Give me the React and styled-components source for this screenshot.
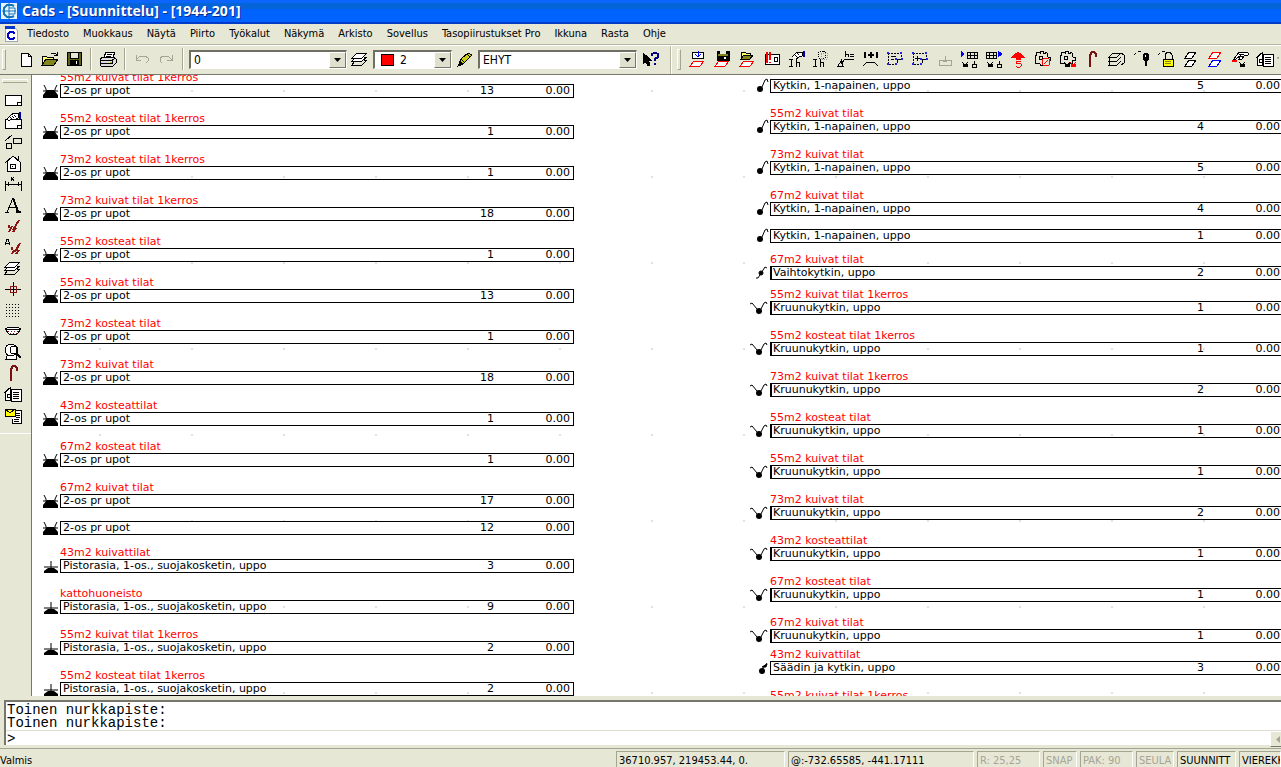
import React from "react";
import styled, { createGlobalStyle } from "styled-components";

const GlobalStyle = createGlobalStyle`
  * {
    box-sizing: border-box;
  }

  body {
    margin: 0;
    background: #e7e7d6;
    color: #000;
    font-family: "DejaVu Sans Condensed", "DejaVu Sans", sans-serif;
    font-size: 11px;
    overflow: hidden;
  }
`;

const Window = styled.div`
  display: flex;
  flex-direction: column;
  height: 100vh;
`;

const TitleBar = styled.header`
  display: flex;
  align-items: center;
  gap: 5px;
  height: 24px;
  padding: 0 0 2px 1px;
  background: linear-gradient(#0a66ff 0 3px, #0464d8 3px 9px, #0062ff 9px 22px, #003cc8 22px);
`;

const Title = styled.h1`
  margin: 0;
  color: #fff;
  font-family: "Open Sans", sans-serif;
  font-size: 14px;
  line-height: 20px;
  font-weight: 700;
  text-shadow: 1px 1px #0a2a88;
  white-space: nowrap;
`;

const MenuBar = styled.nav`
  display: flex;
  align-items: center;
  gap: 14px;
  height: 21px;
  padding: 0 0 1px 4px;
  border-bottom: 1px solid #b5b5a2;
`;

const MenuItem = styled.button`
  padding: 0;
  border: 0;
  background: none;
  color: inherit;
  font: inherit;
  line-height: 18px;
  white-space: nowrap;
`;

const ToolRow = styled.div`
  display: flex;
  height: 30px;
  border-top: 1px solid #fff;
  border-bottom: 1px solid #77776c;
`;

const ToolBar = styled.div`
  display: flex;
  align-items: center;
  padding: 0 8px 2px 2px;
  border-right: 1px solid #b5b5a2;
`;

const WideToolBar = styled.div`
  display: flex;
  flex: 1;
  align-items: center;
  min-width: 0;
  padding: 0 0 2px 5px;
  border-left: 1px solid #fff;
  overflow: hidden;
`;

const Grip = styled.span`
  flex: none;
  width: 4px;
  height: 21px;
  margin-right: ${(p) => (p.$tight ? 5 : 8)}px;
  border: 1px solid #fff;
  border-right-color: #a5a594;
  border-bottom-color: #a5a594;
`;

const Separator = styled.span`
  flex: none;
  width: 2px;
  height: 22px;
  margin: 0 4px;
  border-left: 1px solid #a5a594;
  border-right: 1px solid #fff;
`;

const IconButton = styled.button`
  display: flex;
  align-items: center;
  justify-content: center;
  flex: ${(p) => (p.$fluid ? "1 1 0" : "none")};
  width: 24px;
  height: ${(p) => (p.$short ? 21 : 24)}px;
  min-width: 0;
  padding: 0;
  border: 0;
  background: none;
`;

const CutButton = styled(IconButton)`
  width: 4px;
  overflow: hidden;
  justify-content: flex-start;
`;

const Combo = styled.label`
  display: grid;
  grid-template-columns: ${(p) => (p.$swatch ? "22px 1fr" : "1fr")};
  align-items: center;
  width: ${(p) => p.$width}px;
  height: 19px;
  margin: 0 1px;
  border: 1px solid #6f6f64;
  border-width: 2px 1px 1px 2px;
  border-right-color: #fff;
  border-bottom-color: #fff;
  background: #fff;
`;

const Select = styled.select`
  grid-row: 1;
  grid-column: -2 / -1;
  width: 100%;
  height: 16px;
  padding: 0 18px 0 3px;
  border: 0;
  background: none;
  color: #000;
  font-family: "DejaVu Sans Condensed", "DejaVu Sans", sans-serif;
  font-size: 12px;
  line-height: 16px;
  appearance: none;
`;

const Swatch = styled.span`
  width: 13px;
  height: 12px;
  margin-left: 6px;
  border: 1px solid #000;
  background: #f00;
`;

const DropArrow = styled.span`
  grid-row: 1;
  grid-column: -2 / -1;
  justify-self: end;
  display: flex;
  align-items: center;
  justify-content: center;
  width: 17px;
  height: 16px;
  border: 1px solid #fff;
  border-right-color: #77776c;
  border-bottom-color: #77776c;
  background: #e0e0cf;
  pointer-events: none;
`;

const Workspace = styled.main`
  display: flex;
  flex: 1;
  min-height: 0;
`;

const SideBar = styled.aside`
  flex: none;
  width: 32px;
  border-right: 1px solid #77776c;
`;

const SideTools = styled.div`
  display: flex;
  flex-direction: column;
  padding: 4px 0 8px 1px;
  border-bottom: 1px solid #fff;
`;

const SideGrip = styled.span`
  height: 4px;
  width: 26px;
  margin: 0 0 6px 1px;
  border: 1px solid #fff;
  border-bottom-color: #a5a594;
`;

const Drawing = styled.section`
  display: flex;
  flex: 1;
  align-items: flex-start;
  gap: 176px;
  min-width: 0;
  padding-left: 8px;
  background: radial-gradient(circle, #e2e2e2 0 1px, transparent 1px) 22px -27px / 92px 86px #fff;
  overflow: hidden;
`;

const PartTable = styled.table`
  flex: none;
  width: 534px;
  table-layout: fixed;
  border-collapse: separate;
  border-spacing: 0;
  font-family: "DejaVu Sans", sans-serif;
  font-size: 11px;
  line-height: 12px;
`;

const GroupCell = styled.th`
  padding: 0;
  color: #f00;
  font-weight: 400;
  text-align: left;
`;

const GroupName = styled.div`
  display: flex;
  align-items: flex-end;
  height: ${(p) => p.$space}px;
  overflow: hidden;
  white-space: nowrap;
`;

const SymbolCell = styled.td`
  height: 14px;
  padding: 0;

  svg {
    display: block;
    overflow: visible;
  }
`;

const Cell = styled.td`
  height: 14px;
  padding: 0 3px 0 2px;
  border: solid #000;
  border-width: 1px 0;
  text-align: ${(p) => (p.$number ? "right" : "left")};
  white-space: nowrap;
`;

const NameCell = styled(Cell)`
  padding-left: ${(p) => (p.$heavy ? 1 : 2)}px;
  border-left-width: ${(p) => (p.$heavy ? 2 : 1)}px;
`;

const PriceCell = styled(Cell)`
  border-right-width: 1px;
`;

const Command = styled.section`
  display: flex;
  flex-direction: column;
  height: 45px;
  margin: 4px 0 0 4px;
  padding-top: 2px;
  border-top: 2px solid #77776c;
  border-left: 2px solid #77776c;
  background: #fff;
  font-family: "Liberation Mono", monospace;
  font-size: 14px;
  line-height: 13px;
`;

const History = styled.pre`
  margin: 0;
  padding-left: 1px;
  height: 26px;
  font: inherit;
`;

const PromptRow = styled.div`
  display: flex;
  flex: 1;
  border-top: 1px solid #deded0;
`;

const Prompt = styled.input`
  flex: 1;
  min-width: 0;
  padding: 0 0 0 1px;
  border: 0;
  background: none;
  font: inherit;
  outline: none;
`;

const ScrollButton = styled.button`
  display: flex;
  align-items: center;
  justify-content: flex-end;
  width: 11px;
  padding: 0;
  border: 1px solid #fff;
  border-bottom-color: #77776c;
  border-right: 0;
  background: #e7e7d6;
`;

const StatusBar = styled.footer`
  display: flex;
  gap: 3px;
  height: 19px;
  margin-top: 3px;
  padding-top: 2px;
  border-top: 1px solid #a5a594;
  line-height: 17px;
  overflow: hidden;
`;

const StatusText = styled.span`
  flex: 1;
  padding-top: 1px;
`;

const StatusPane = styled.span`
  flex: none;
  width: ${(p) => p.$width}px;
  padding-left: 2px;
  border: 1px solid #a5a594;
  border-right-color: #fff;
  border-bottom: 0;
  color: ${(p) => (p.$off ? "#a5a594" : "#000")};
  white-space: nowrap;
  overflow: hidden;
`;

const sheet = (x, y, stroke = "#000") => (
  <path d={`M${x + 4} ${y}h10l-4 5h-10z`} stroke={stroke} fill="#fff" />
);

const hand = (
  <>
    <path d="M3 7L7 3l3-2h4v5l-4 2-3-1-2 2z" fill="#fff" />
    <path d="M6 5l2 2M8 4l2 2M10 3l2 2" />
    <path d="M15 0h2v7h-2z" fill="#00a" stroke="none" />
  </>
);

const bugs = (x, color = "#000") => (
  <>
    <path d={`M${x} 12l2 2M${x + 6} 12l-2 2`} stroke={color} />
    <path d={`M${x + 1} 14h5v3h-5z`} fill={color} stroke="none" />
  </>
);

const gear = (
  <>
    <path d="M6 1h3v2l2 1 1-2 2 2-1 2 1 1h2v3h-2l-1 1 1 2-2 1-2-1-1 1v1H6v-1l-2-1-2 1-1-2 1-2-1-1V6l2-1-1-2 2-1 2 1z" />
    <circle cx="7" cy="8" r="2" />
  </>
);

const houseDoc = (
  <>
    <path d="M1 8l5-5v12H1z" fill="#fff" />
    <path d="M3 9h3v3H3zM0 8l7-6M7 4h10v12H7z" fill="#fff" />
    <path d="M9 7h6M9 9h6M9 11h6M9 13h6" />
  </>
);

const hook = <path d="M7 17V5l2-3h2l2 2v3" stroke="#7b1010" strokeWidth="2" />;

const selectBox = (
  <>
    <path d="M2 3h13v4M2 3v11h6" strokeDasharray="2 1" />
    <path d="M11 13v-4h5" />
    <g fill="#fff" stroke="#22e">
      <circle cx="2" cy="3" r="1" />
      <circle cx="15" cy="3" r="1" />
      <circle cx="2" cy="14" r="1" />
      <circle cx="10" cy="14" r="1" />
      <circle cx="16" cy="9" r="1" />
      <circle cx="10" cy="9" r="1" />
    </g>
  </>
);

const stack = (
  <>
    <path d="M4 11l-3 4h10l5-5h-3" />
    <path d="M4 8l-3 3h10l5-4h-3" fill="#fff" />
    <path d="M1 8h10l5-5H6z" fill="#fff" />
  </>
);

const icons = {
  newFile: <path d="M4 3h7l3 3v10H4zM11 3v3h3" fill="#fff" />,
  open: (
    <>
      <path d="M1 15V6h4l1 1h6v2" fill="#ffff73" />
      <path d="M1 15l4-6h12l-4 6z" fill="#84841c" />
      <path d="M10 4l2-1h2l2 2M16 2v3h-3" />
    </>
  ),
  save: (
    <>
      <path d="M2 2h14v13H2z" fill="#63631c" />
      <path d="M5 2h8v6H5z" fill="#e7e7d6" />
      <path d="M5 10h8v5H5z" fill="#000" />
      <path d="M11 11h1v3h-1z" fill="#fff" stroke="none" />
    </>
  ),
  print: (
    <>
      <path d="M5 7l2-5h9l-2 5z" fill="#fff" />
      <path d="M8 4h5M7 6h5" />
      <path d="M1 9l3-2h11l2 2v4l-3 3H2l-1-2z" fill="#ddd" />
      <path d="M1 10h12v4M13 10l4-2M2 13h11" />
      <path d="M11 12h2" stroke="#bb0" />
    </>
  ),
  undo: <path d="M3 5v5h5M3 10l4-4h5l3 2v3l-2 2" stroke="#a5a594" />,
  redo: <path d="M15 5v5h-5M15 10l-4-4H6L3 8v3l2 2" stroke="#a5a594" />,
  stack,
  pencil: (
    <>
      <path d="M3 14l2-5 7-6 4 2-8 8z" fill="#cccc10" />
      <path d="M5 9l4 4M11 4l3 3" />
      <path d="M2 16l2-4 3 2z" fill="#000" />
    </>
  ),
  help: (
    <>
      <path d="M2 3v11l2-3 3 5 2-1-2-5h3z" fill="#000" />
      <path d="M11 6V4l2-1h2l2 1v3l-3 2v2M14 13v2" stroke="#008" strokeWidth="2" />
    </>
  ),
  importSheet: (
    <>
      <path d="M3 2h11v6H3z" fill="#fff" />
      <path d="M9 1v5M6 4l3 3 3-3" stroke="#00f" />
      {sheet(1, 11, "#f00")}
    </>
  ),
  saveSheet: (
    <>
      <path d="M3 1h12v9H3z" fill="#000" />
      <path d="M6 1h6v3H6z" fill="#e7e7d6" stroke="none" />
      <path d="M4 4h10v2H4z" fill="#84841c" stroke="none" />
      <path d="M10 7h2v2h-2z" fill="#fff" stroke="none" />
      {sheet(1, 11, "#f00")}
    </>
  ),
  openSheet: (
    <>
      <path d="M2 9V2h4l1 1h4v2" fill="#ffff73" />
      <path d="M2 9l3-4h9l-3 4z" fill="#84841c" />
      {sheet(1, 11, "#f00")}
    </>
  ),
  redPlate: (
    <>
      <path d="M2 4h14v10H2z" fill="#fff" />
      <path d="M4 2v11M7 2v8M7 12v1" stroke="#f00" strokeWidth="2" />
      <path d="M11 7h3v4h-3z" />
    </>
  ),
  heightHand: (
    <>
      <path d="M4 7l4-4 3-1h3v4l-3 1-3 2M7 5l2 2M9 3l2 2" fill="#fff" />
      <path d="M15 1h2v6h-2z" fill="#00a" stroke="none" />
      <path d="M1 9h4M3 9v7M1 16h4M8 9v8M8 12h3v5" />
    </>
  ),
  heightDots: (
    <>
      <circle cx="10" cy="5" r="4" strokeDasharray="1 1" />
      <path d="M9 3h6v6H9z" stroke="#999" strokeDasharray="1 1" />
      <path d="M1 9h4M3 9v7M1 16h4M8 9v8M8 12h3v5" />
    </>
  ),
  heightMark: (
    <>
      <path d="M8 1v6M8 4h3v3M13 4h4M13 6h4M17 9H8l-4 5" />
      <path d="M1 16l3-5 2 5zM4 9v2" />
    </>
  ),
  sum: (
    <>
      <path d="M3 2v6M15 2v6M6 5h6M9 2v6" strokeWidth="2" />
      <path d="M1 16l4-4h7l4 4" />
    </>
  ),
  selectMinus: (
    <>
      {selectBox}
      <path d="M5 6h5M5 9h3" />
    </>
  ),
  selectPlus: (
    <>
      {selectBox}
      <path d="M4 8h5M6 6v5" />
    </>
  ),
  tray: <path d="M3 10h12v5H3zM9 6v6M7 11h4" stroke="#a5a594" />,
  tableLeft: (
    <>
      <path d="M1 1v6l3-3z" fill="#00f" stroke="#00f" />
      <path d="M7 2h10v6H7zM7 5h10M10 2v6M14 2v6" />
      {bugs(2)}
      <path d="M12 17v-3h4v3zM14 11v3" />
    </>
  ),
  tableRight: (
    <>
      <path d="M13 1v6l4-3z" fill="#00f" stroke="#00f" />
      <path d="M1 2h10v6H1zM1 5h10M4 2v6M8 2v6" />
      {bugs(2)}
      <path d="M12 17v-3h4v3zM14 11v3" />
    </>
  ),
  redArrow: (
    <>
      <path d="M9 2l6 5H3zM7 7h4v2H7z" fill="#f00" stroke="#f00" />
      <path d="M12 12l-1-1H8l-1 1v1l5 1v2l-1 1H8l-1-1" stroke="#f00" />
    </>
  ),
  gearDial: (
    <>
      {gear}
      <circle cx="12" cy="12" r="4" stroke="#f00" fill="#e7e7d6" />
      <path d="M10 14l4-4" stroke="#f00" />
    </>
  ),
  gearBugs: (
    <>
      {gear}
      {bugs(5)}
      {bugs(11, "#f00")}
    </>
  ),
  hook,
  stackTurn: (
    <>
      <path d="M1 7h8l4-4H5zM2 8l-1 3h8l4-4M2 12l-1 3h8l4-4" />
      <path d="M13 3l3 2v8l-3 2" />
    </>
  ),
  bulb: (
    <>
      <path d="M1 5l2-2M5 1h3" />
      <ellipse cx="13" cy="7" rx="3" ry="4" fill="#000" />
      <path d="M13 11v5" strokeWidth="2" />
      <path d="M12 5h1v2h-1z" fill="#fff" stroke="none" />
    </>
  ),
  lock: (
    <>
      <path d="M1 5l2-2M5 1h3" />
      <path d="M8 9V5l2-3h3l2 3v4" />
      <path d="M6 9h10v7H6z" fill="#ff0" />
      <path d="M8 11h6M8 13h6" stroke="#84841c" />
    </>
  ),
  twoSheets: (
    <>
      <path d="M3 8h7l4-6H7z" fill="#fff" />
      <path d="M3 16h7l4-6H7z" fill="#fff" />
    </>
  ),
  colorSheets: (
    <>
      <path d="M3 8h8l4-6H7z" stroke="#f00" fill="#fff" />
      <path d="M3 16h8l4-6H7z" stroke="#00f" fill="#fff" />
    </>
  ),
  handBug: (
    <>
      <path d="M3 9l5-7h6l3 1v2l-4 1-2 3H8l1-3-4 3z" fill="#fff" />
      <path d="M8 4h5M9 6h3" />
      <path d="M1 11h5" stroke="#f00" strokeWidth="2" />
      {bugs(8)}
    </>
  ),
  houseDoc,
  page: (
    <>
      <path d="M1 4h16v10H1z" fill="#fff" />
      <path d="M13 14v-3h4" />
    </>
  ),
  pageHand: (
    <>
      <path d="M1 7h16v9H1z" fill="#fff" />
      <path d="M13 16v-3h4" />
      {hand}
    </>
  ),
  shapes: (
    <>
      <path d="M1 8l7-6M9 5h8v5H9z" />
      <circle cx="5" cy="13" r="3" />
    </>
  ),
  house: (
    <>
      <path d="M3 8v9h13V8L9 2z" fill="#fff" />
      <path d="M1 9l8-7 8 7M6 10h5v4H6zM14 2v4" />
      <path d="M8 12h1" />
    </>
  ),
  dimension: (
    <>
      <path d="M1 6v10M17 6v10M1 9h16M4 7v4M14 7v4" />
      <path d="M7 2l3 4M10 2L7 6" />
    </>
  ),
  letter: (
    <>
      <path d="M3 16L9 2l6 14M5 11h8M1 16h4" />
      <path d="M9 2l5 14M12 16h5" strokeWidth="2" />
    </>
  ),
  ticks: <path d="M5 8v3M5 15l3-6M9 13l6-10M9 15l3-4" stroke="#8b1515" strokeWidth="2" />,
  letterTicks: (
    <>
      <path d="M1 7l2-6h1l2 6M2 5h4" />
      <path d="M8 9v3M8 16l2-4M11 14l5-9M12 16l3-4" stroke="#8b1515" strokeWidth="2" />
    </>
  ),
  cross: (
    <>
      <path d="M1 9h16M9 2v14" />
      <path d="M6 6h6v6H6z" stroke="#8b1515" />
    </>
  ),
  dots: <path d="M2 3h15M2 6h15M2 9h15M2 12h15M2 15h15" strokeDasharray="1 2" />,
  lips: (
    <>
      <path d="M1 7l4-2h3l1 1 1-1h3l4 2-4 5H5z" fill="#fff" />
      <path d="M1 7h16" />
      <path d="M4 9h11M6 11h8" stroke="#8b1515" strokeDasharray="1 2" />
    </>
  ),
  magnify: (
    <>
      <path d="M4 10h8v6H2z" fill="#fff" />
      <circle cx="7" cy="7" r="6" fill="#fff" />
      <circle cx="10" cy="7" r="4" />
      <path d="M12 10l5 5" strokeWidth="2" />
    </>
  ),
  mailDoc: (
    <>
      <path d="M10 4h7v13H8v-4" fill="#fff" />
      <path d="M12 7h4M12 9h4M12 11h4M10 13h5M10 15h5" />
      <path d="M1 3h10v7H1z" fill="#ff0" />
      <path d="M1 3l5 4 5-4" />
    </>
  ),
  sliver: <path d="M2 2v6M3 2h4v5" />,
};

const Icon = ({ name }) => (
  <svg
    width="18"
    height="18"
    viewBox="0 0 18 18"
    fill="none"
    stroke="#000"
    shapeRendering="crispEdges"
    aria-hidden="true"
  >
    {icons[name]}
  </svg>
);

const symbols = {
  double: (
    <>
      <path d="M7 6h7l4 5v3H3v-3z" fill="#000" stroke="none" />
      <path d="M4 1l2 4v2M17 1l-2 4v2M3 7h4M14 7h4" />
    </>
  ),
  single: (
    <>
      <path d="M8 9h6l4 3v2H4v-2z" fill="#000" stroke="none" />
      <path d="M11 2v7M4 8h14" />
    </>
  ),
  one: (
    <>
      <circle cx="10" cy="10" r="3" fill="#000" stroke="none" />
      <path d="M12 8l3-7 2-1 1 3" />
    </>
  ),
  change: (
    <>
      <circle cx="11" cy="7" r="2" fill="#000" />
      <path d="M6 12h2l7-11 2 1" />
    </>
  ),
  crown: (
    <>
      <circle cx="9" cy="10" r="3" fill="#000" stroke="none" />
      <path d="M0 3l2-1 5 6M11 8l3-6 2-1 1 2" />
    </>
  ),
  dimmer: (
    <>
      <circle cx="12" cy="10" r="3" fill="#000" stroke="none" />
      <path d="M12 9l5-7M12 6l5-3-1 3z" fill="#000" />
    </>
  ),
};

const UPOT = "2-os pr upot";
const PISTO = "Pistorasia, 1-os., suojakosketin, uppo";
const KYTKIN = "Kytkin, 1-napainen, uppo";
const KRUUNU = "Kruunukytkin, uppo";

// space = free height above the row, the group name sits at its bottom
const leftParts = [
  { space: 9, group: "55m2 kuivat tilat 1kerros", symbol: "double", name: UPOT, count: 13 },
  { space: 27, group: "55m2 kosteat tilat 1kerros", symbol: "double", name: UPOT, count: 1 },
  { space: 27, group: "73m2 kosteat tilat 1kerros", symbol: "double", name: UPOT, count: 1 },
  { space: 27, group: "73m2 kuivat tilat 1kerros", symbol: "double", name: UPOT, count: 18 },
  { space: 27, group: "55m2 kosteat tilat", symbol: "double", name: UPOT, count: 1 },
  { space: 27, group: "55m2 kuivat tilat", symbol: "double", name: UPOT, count: 13 },
  { space: 27, group: "73m2 kosteat tilat", symbol: "double", name: UPOT, count: 1 },
  { space: 27, group: "73m2 kuivat tilat", symbol: "double", name: UPOT, count: 18 },
  { space: 27, group: "43m2 kosteattilat", symbol: "double", name: UPOT, count: 1 },
  { space: 27, group: "67m2 kosteat tilat", symbol: "double", name: UPOT, count: 1 },
  { space: 27, group: "67m2 kuivat tilat", symbol: "double", name: UPOT, count: 17 },
  { space: 13, group: "", symbol: "double", name: UPOT, count: 12 },
  { space: 24, group: "43m2 kuivattilat", symbol: "single", name: PISTO, count: 3 },
  { space: 27, group: "kattohuoneisto", symbol: "single", name: PISTO, count: 9 },
  { space: 27, group: "55m2 kuivat tilat 1kerros", symbol: "single", name: PISTO, count: 2 },
  { space: 27, group: "55m2 kosteat tilat 1kerros", symbol: "single", name: PISTO, count: 2 },
];

const rightParts = [
  { space: 4, group: "", symbol: "one", name: KYTKIN, count: 5 },
  { space: 27, group: "55m2 kuivat tilat", symbol: "one", name: KYTKIN, count: 4 },
  { space: 27, group: "73m2 kuivat tilat", symbol: "one", name: KYTKIN, count: 5 },
  { space: 27, group: "67m2 kuivat tilat", symbol: "one", name: KYTKIN, count: 4 },
  { space: 13, group: "", symbol: "one", name: KYTKIN, count: 1 },
  { space: 23, group: "67m2 kuivat tilat", symbol: "change", name: "Vaihtokytkin, uppo", count: 2 },
  { space: 21, group: "55m2 kuivat tilat 1kerros", symbol: "crown", name: KRUUNU, count: 1 },
  { space: 27, group: "55m2 kosteat tilat 1kerros", symbol: "crown", name: KRUUNU, count: 1 },
  { space: 27, group: "73m2 kuivat tilat 1kerros", symbol: "crown", name: KRUUNU, count: 2 },
  { space: 27, group: "55m2 kosteat tilat", symbol: "crown", name: KRUUNU, count: 1 },
  { space: 27, group: "55m2 kuivat tilat", symbol: "crown", name: KRUUNU, count: 1 },
  { space: 27, group: "73m2 kuivat tilat", symbol: "crown", name: KRUUNU, count: 2 },
  { space: 27, group: "43m2 kosteattilat", symbol: "crown", name: KRUUNU, count: 1 },
  { space: 27, group: "67m2 kosteat tilat", symbol: "crown", name: KRUUNU, count: 1 },
  { space: 27, group: "67m2 kuivat tilat", symbol: "crown", name: KRUUNU, count: 1 },
  { space: 18, group: "43m2 kuivattilat", symbol: "dimmer", name: "Säädin ja kytkin, uppo", count: 3 },
  { space: 27, group: "55m2 kuivat tilat 1kerros" },
];

const Parts = ({ parts, label }) => (
  <PartTable aria-label={label}>
    <colgroup>
      <col width="20" />
      <col />
      <col width="40" />
      <col width="77" />
    </colgroup>
    <tbody>
      {parts.map((part, index) => (
        <React.Fragment key={index}>
          <tr>
            <td />
            <GroupCell colSpan={3}>
              <GroupName $space={part.space}>{part.group}</GroupName>
            </GroupCell>
          </tr>
          {part.name && (
            <tr>
              <SymbolCell>
                <svg width="20" height="14" viewBox="0 0 20 14" fill="none" stroke="#000" aria-hidden="true">
                  {symbols[part.symbol]}
                </svg>
              </SymbolCell>
              <NameCell $heavy={part.symbol === "crown" || part.symbol === "change"}>{part.name}</NameCell>
              <Cell $number>{part.count}</Cell>
              <PriceCell $number>0.00</PriceCell>
            </tr>
          )}
        </React.Fragment>
      ))}
    </tbody>
  </PartTable>
);

const ComboBox = ({ label, value, width, swatch }) => (
  <Combo $width={width} $swatch={swatch}>
    {swatch && <Swatch />}
    <Select aria-label={label} defaultValue={value}>
      <option>{value}</option>
    </Select>
    <DropArrow>
      <svg width="7" height="4" viewBox="0 0 7 4" aria-hidden="true">
        <path d="M0 0h7L3.5 4z" />
      </svg>
    </DropArrow>
  </Combo>
);

const menus = [
  "Tiedosto",
  "Muokkaus",
  "Näytä",
  "Piirto",
  "Työkalut",
  "Näkymä",
  "Arkisto",
  "Sovellus",
  "Tasopiirustukset Pro",
  "Ikkuna",
  "Rasta",
  "Ohje",
];

const planTools = [
  "importSheet",
  "saveSheet",
  "openSheet",
  "redPlate",
  "heightHand",
  "heightDots",
  "heightMark",
  "sum",
  "selectMinus",
  "selectPlus",
  "tray",
  "tableLeft",
  "tableRight",
  "redArrow",
  "gearDial",
  "gearBugs",
  "hook",
  "stackTurn",
  "bulb",
  "lock",
  "twoSheets",
  "colorSheets",
  "handBug",
  "houseDoc",
];

const sideTools = [
  "page",
  "pageHand",
  "shapes",
  "house",
  "dimension",
  "letter",
  "ticks",
  "letterTicks",
  "stack",
  "cross",
  "dots",
  "lips",
  "magnify",
  "hook",
  "houseDoc",
  "mailDoc",
];

const MenuLogo = styled.svg`
  margin-right: -5px;
`;

const Tool = ({ name, ...rest }) => (
  <IconButton type="button" aria-label={name} {...rest}>
    <Icon name={name} />
  </IconButton>
);

const App = () => (
  <Window>
    <GlobalStyle />
    <TitleBar>
      <svg width="16" height="18" viewBox="0 0 16 18" aria-hidden="true">
        <path d="M0 1h16v16H0z" fill="#e8f4fb" />
        <path d="M13 4l-2-1H6L3 6v6l3 3h5l2-1" fill="none" stroke="#1474b8" strokeWidth="2" />
        <path d="M8 1v16M1 9h14M8 6h6v6H8" fill="none" stroke="#1474b8" />
      </svg>
      <Title>Cads - [Suunnittelu] - [1944-201]</Title>
    </TitleBar>
    <MenuBar>
      <MenuLogo width="14" height="16" viewBox="0 0 14 16" shapeRendering="crispEdges" aria-hidden="true">
        <path d="M1 1h9l3 3v11H1z" fill="#fff" stroke="#9ab" />
        <path d="M1 0h10v3H1z" fill="#0838c8" />
        <path d="M10 8V7L9 6H6L4 8v3l2 2h3l1-1v-1" fill="none" stroke="#00c" strokeWidth="2" />
      </MenuLogo>
      {menus.map((menu) => (
        <MenuItem type="button" key={menu}>
          {menu}
        </MenuItem>
      ))}
    </MenuBar>
    <ToolRow>
      <ToolBar>
        <Grip />
        <Tool name="newFile" />
        <Tool name="open" />
        <Tool name="save" />
        <Separator />
        <Tool name="print" />
        <Separator />
        <Tool name="undo" />
        <Tool name="redo" />
        <Separator />
        <ComboBox label="Taso" value="0" width={158} />
        <Tool name="stack" />
        <ComboBox label="Väri" value="2" width={79} swatch />
        <Tool name="pencil" />
        <ComboBox label="Viivatyyppi" value="EHYT" width={159} />
        <Tool name="help" />
      </ToolBar>
      <WideToolBar>
        <Grip $tight />
        {planTools.map((name) => (
          <Tool key={name} name={name} $fluid />
        ))}
        <CutButton type="button" aria-label="sliver">
          <Icon name="sliver" />
        </CutButton>
      </WideToolBar>
    </ToolRow>
    <Workspace>
      <SideBar>
        <SideTools>
          <SideGrip />
          {sideTools.map((name) => (
            <Tool key={name} name={name} $short />
          ))}
        </SideTools>
      </SideBar>
      <Drawing>
        <Parts parts={leftParts} label="Pistorasiat" />
        <Parts parts={rightParts} label="Kytkimet" />
      </Drawing>
    </Workspace>
    <Command>
      <History>{"Toinen nurkkapiste:\nToinen nurkkapiste:"}</History>
      <PromptRow>
        <Prompt aria-label="Komento" defaultValue=">" />
        <ScrollButton type="button" aria-label="Vieritä">
          <svg width="5" height="7" viewBox="0 0 5 7" aria-hidden="true">
            <path d="M4 0v7L0 3.5z" fill="#a5a594" />
          </svg>
        </ScrollButton>
      </PromptRow>
    </Command>
    <StatusBar>
      <StatusText>Valmis</StatusText>
      <StatusPane $width={169}>36710.957, 219453.44, 0.</StatusPane>
      <StatusPane $width={186}>@:-732.65585, -441.17111</StatusPane>
      <StatusPane $width={63} $off>R: 25,25</StatusPane>
      <StatusPane $width={34} $off>SNAP</StatusPane>
      <StatusPane $width={53} $off>PAK: 90</StatusPane>
      <StatusPane $width={38} $off>SEULA</StatusPane>
      <StatusPane $width={59}>SUUNNITT</StatusPane>
      <StatusPane $width={42}>VIEREKK</StatusPane>
    </StatusBar>
  </Window>
);

export default App;
